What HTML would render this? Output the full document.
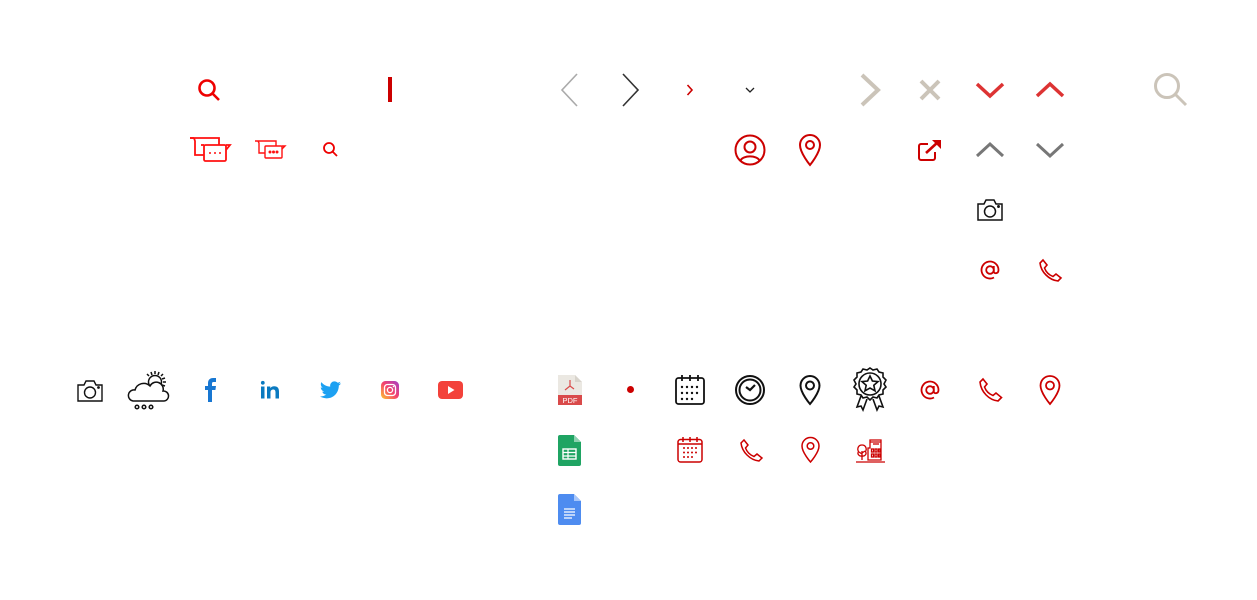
<!DOCTYPE html>
<html><head><meta charset="utf-8"><style>
html,body{margin:0;padding:0;background:#fff;width:1257px;height:600px;overflow:hidden;position:relative}
svg{position:absolute;overflow:visible}
</style></head><body>
<!-- Row 90 -->
<svg style="left:197px;top:78px" width="24" height="24" viewBox="0 0 24 24" fill="none" stroke="#e00" stroke-width="2.6"><circle cx="10" cy="10" r="7.5"/><path d="M15.5 15.5L22 22"/></svg>
<div style="position:absolute;left:388px;top:77px;width:4px;height:25px;background:#c00"></div>
<svg style="left:560px;top:73px" width="20" height="34" fill="none" stroke="#aaa" stroke-width="1.6"><path d="M17 1L2 17L17 33"/></svg>
<svg style="left:620px;top:73px" width="20" height="34" fill="none" stroke="#333" stroke-width="1.6"><path d="M3 1L18 17L3 33"/></svg>
<svg style="left:686px;top:84px" width="8" height="12" fill="none" stroke="#c00" stroke-width="1.6"><path d="M1.5 1L6 6L1.5 11"/></svg>
<svg style="left:745px;top:87px" width="10" height="6" fill="none" stroke="#222" stroke-width="1.3"><path d="M1 1L5 5L9 1"/></svg>
<svg style="left:860px;top:73px" width="22" height="34" fill="none" stroke="#cbc4b9" stroke-width="4"><path d="M2 2L18 17L2 32"/></svg>
<svg style="left:919px;top:79px" width="22" height="22" fill="none" stroke="#cbc4b9" stroke-width="4"><path d="M2 2L20 20M20 2L2 20"/></svg>
<svg style="left:976px;top:82px" width="28" height="16" fill="none" stroke="#d33" stroke-width="3.5"><path d="M1 2L14 14L27 2"/></svg>
<svg style="left:1036px;top:82px" width="28" height="16" fill="none" stroke="#d33" stroke-width="3.5"><path d="M1 14L14 2L27 14"/></svg>
<svg style="left:1153px;top:72px" width="36" height="36" fill="none" stroke="#cbc4b9" stroke-width="3"><circle cx="14" cy="14" r="11.5"/><path d="M22 22L33 33"/></svg>
<!-- Row 150 -->
<svg style="left:189px;top:137px" width="42" height="26" fill="none" stroke="#f11" stroke-width="1.8"><path d="M1 1H30V8M5 1L6 4V18H15"/><path d="M1 1H5"/><rect x="15" y="8" width="22" height="16" rx="1.5"/><path d="M37 8H41L37 13"/><path d="M12 8H15"/><circle cx="21" cy="16" r="1" fill="#f11" stroke="none"/><circle cx="26" cy="16" r="1" fill="#f11" stroke="none"/><circle cx="31" cy="16" r="1" fill="#f11" stroke="none"/></svg>
<svg style="left:254px;top:140px" width="32" height="19" fill="none" stroke="#f11" stroke-width="1.4"><path d="M1 1H22V6M4 1L5 3V13H11"/><rect x="11" y="6" width="17" height="12" rx="1"/><path d="M28 6H31L28 9"/><circle cx="16" cy="12" r=".8" fill="#f11"/><circle cx="19.5" cy="12" r=".8" fill="#f11"/><circle cx="23" cy="12" r=".8" fill="#f11"/></svg>
<svg style="left:322px;top:141px" width="16" height="16" fill="none" stroke="#e00" stroke-width="1.8"><circle cx="7" cy="7" r="5"/><path d="M10.5 10.5L15 15"/></svg>
<svg style="left:734px;top:134px" width="32" height="32" fill="none" stroke="#c00" stroke-width="2"><circle cx="16" cy="16" r="14.5"/><circle cx="16" cy="13" r="5.5"/><path d="M6.5 26.5C9 21 23 21 25.5 26.5"/></svg>
<svg style="left:798px;top:134px" width="24" height="32" fill="none" stroke="#c00" stroke-width="2"><path d="M12 31C12 31 2 19 2 11A10 10 0 0 1 22 11C22 19 12 31 12 31Z"/><circle cx="12" cy="11" r="4"/></svg>
<svg style="left:918px;top:139px" width="24" height="22" fill="none" stroke="#c00" stroke-width="2"><path d="M10 5H3A2 2 0 0 0 1 7V19A2 2 0 0 0 3 21H15A2 2 0 0 0 17 19V13"/><path d="M8 14L20 3" stroke-width="2.6"/><path d="M14 1H23V10Z" fill="#c00" stroke="none"/></svg>
<svg style="left:976px;top:142px" width="28" height="16" fill="none" stroke="#777" stroke-width="3"><path d="M1 14L14 2L27 14"/></svg>
<svg style="left:1036px;top:142px" width="28" height="16" fill="none" stroke="#777" stroke-width="3"><path d="M1 2L14 14L27 2"/></svg>
<!-- Row 210 -->
<svg style="left:977px;top:199px" width="26" height="22" fill="none" stroke="#111" stroke-width="1.5"><path d="M1 5H7L9 1H17L19 5H25V21H1Z"/><circle cx="13" cy="12.5" r="5.5"/><circle cx="21.5" cy="7.5" r=".7" fill="#111"/></svg>
<!-- Row 270 -->
<svg style="left:980px;top:260px" width="20" height="20" fill="none" stroke="#c00" stroke-width="1.8"><circle cx="10" cy="10" r="3.8"/><path d="M13.8 6V11.5C13.8 14 18.5 14 18.5 10A8.5 8.5 0 1 0 14 17.5"/></svg>
<svg style="left:1038px;top:259px" width="24" height="24" fill="none" stroke="#c00" stroke-width="1.6"><path d="M5 1L9 6L6.5 9C8 13 11 16 15 17.5L18 15L23 19L20 22C11 21 3 13 2 4Z"/></svg>
<!-- Row 390 left -->
<svg style="left:77px;top:380px" width="26" height="22" fill="none" stroke="#111" stroke-width="1.4"><path d="M1 5H7L9 1H17L19 5H25V21H1Z"/><circle cx="13" cy="12.5" r="5.5"/><circle cx="21.5" cy="7.5" r=".7" fill="#111"/></svg>
<svg style="left:129px;top:370px" width="42" height="42" fill="none" stroke="#111" stroke-width="1.5"><circle cx="26" cy="12" r="6.5"/><path d="M26 1V4M34 4L32 6M37 12H34M34 20L32 18M18 4L20 6M22 2L23 5M30 2L29 5M36 8L33 9M36 16L33 15"/><path d="M4 31H35A5 5 0 0 0 34 21A7 7 0 0 0 21 16A9 9 0 0 0 6 20A5.5 5.5 0 0 0 4 31Z" fill="#fff"/><circle cx="8" cy="37" r="1.8"/><circle cx="15" cy="37" r="1.8"/><circle cx="22" cy="37" r="1.8"/></svg>
<svg style="left:204px;top:378px" width="12" height="24"><path d="M4 24V12H1V8H4V5C4 2 6 0 9 0H12V4H9.5C8.5 4 8 4.5 8 5.5V8H12L11.4 12H8V24Z" fill="#1877d2"/></svg>
<svg style="left:261px;top:381px" width="19" height="18"><rect x="0" y="5.5" width="3.5" height="12" fill="#0a7ac0"/><circle cx="1.8" cy="1.8" r="1.9" fill="#0a7ac0"/><path d="M6 5.5H9.3V7.2C10 6 11.5 5.2 13.2 5.2C16.5 5.2 18 7 18 10.5V17.5H14.5V11.5C14.5 9.8 14 8.5 12.3 8.5C10.5 8.5 9.5 9.6 9.5 11.5V17.5H6Z" fill="#0a7ac0"/></svg>
<svg style="left:320px;top:381px" width="21" height="18" viewBox="0 0 24 20"><path d="M24 2.4C23.1 2.8 22.2 3 21.2 3.2C22.2 2.6 22.9 1.6 23.3 .5C22.3 1.1 21.3 1.5 20.2 1.7C18.3-.3 15-.4 13.1 1.5C11.8 2.7 11.3 4.5 11.7 6.2C7.7 6 4 4.1 1.6 1C.3 3.2 1 6.1 3.1 7.5C2.3 7.5 1.6 7.3 .9 6.9C.9 9.2 2.6 11.2 4.8 11.7C4.1 11.9 3.3 11.9 2.6 11.8C3.2 13.8 5.1 15.2 7.2 15.2C5.2 16.8 2.5 17.6 0 17.3C2.2 18.7 4.9 19.5 7.5 19.5C16.6 19.5 21.6 11.9 21.5 4.9C22.5 4.2 23.4 3.4 24 2.4Z" fill="#1da1f2"/></svg>
<svg style="left:381px;top:381px" width="18" height="18"><defs><linearGradient id="ig" x1="0" y1="1" x2="1" y2="0"><stop offset="0" stop-color="#fdc830"/><stop offset=".5" stop-color="#f5426c"/><stop offset="1" stop-color="#a23ec9"/></linearGradient></defs><rect width="18" height="18" rx="4.5" fill="url(#ig)"/><rect x="3.5" y="3.5" width="11" height="11" rx="3" fill="none" stroke="#fff" stroke-width="1.3"/><circle cx="9" cy="9" r="2.6" fill="none" stroke="#fff" stroke-width="1.3"/><circle cx="12.5" cy="5.5" r=".8" fill="#fff"/></svg>
<svg style="left:438px;top:381px" width="25" height="18"><rect width="25" height="18" rx="4" fill="#f3423b"/><path d="M10 5V13L16.5 9Z" fill="#fff"/></svg>
<!-- Row 390 right -->
<svg style="left:558px;top:375px" width="24" height="30"><path d="M0 0H17L24 7V30H0Z" fill="#ebe8e2"/><path d="M17 0L24 7H17Z" fill="#d8d4cc"/><rect x="0" y="20" width="24" height="10" fill="#d94a4a"/><text x="12" y="28" font-family="Liberation Sans" font-size="7.5" fill="#fff" text-anchor="middle">PDF</text><path d="M12 5V11M12 11L7 15M12 11L16 14" stroke="#d94a4a" stroke-width="1.2" fill="none"/></svg>
<div style="position:absolute;left:627px;top:386px;width:7px;height:7px;border-radius:50%;background:#c00"></div>
<svg style="left:675px;top:374px" width="30" height="31" fill="none" stroke="#111" stroke-width="1.8"><rect x="1" y="4" width="28" height="26" rx="2.5"/><path d="M7 1V7M15 1V7M23 1V7"/><g fill="#111" stroke="none"><circle cx="7" cy="13" r="1.2"/><circle cx="12" cy="13" r="1.2"/><circle cx="17" cy="13" r="1.2"/><circle cx="22" cy="13" r="1.2"/><circle cx="7" cy="19" r="1.2"/><circle cx="12" cy="19" r="1.2"/><circle cx="17" cy="19" r="1.2"/><circle cx="22" cy="19" r="1.2"/><circle cx="7" cy="25" r="1.2"/><circle cx="12" cy="25" r="1.2"/><circle cx="17" cy="25" r="1.2"/></g></svg>
<svg style="left:735px;top:375px" width="30" height="30" fill="none" stroke="#111" stroke-width="2"><circle cx="15" cy="15" r="14"/><circle cx="15" cy="15" r="10.5"/><path d="M11 12L15 15L20 10" stroke-width="2.2"/></svg>
<svg style="left:799px;top:375px" width="22" height="30" fill="none" stroke="#111" stroke-width="2"><path d="M11 29C11 29 1.5 18 1.5 10.5A9.5 9.5 0 0 1 20.5 10.5C20.5 18 11 29 11 29Z"/><circle cx="11" cy="10.5" r="4"/></svg>
<svg style="left:852px;top:367px" width="36" height="46" fill="none" stroke="#111" stroke-width="1.6"><path d="M18 1L21 3L25 2L27 5L31 6L31 10L34 13L32 17L34 20L31 23L31 27L27 28L25 31L21 30L18 33L15 30L11 31L9 28L5 27L5 23L2 20L4 17L2 13L5 10L5 6L9 5L11 2L15 3Z"/><circle cx="18" cy="17" r="11"/><path d="M18 9L20.4 14L26 14.6L21.8 18.3L23 23.8L18 21L13 23.8L14.2 18.3L10 14.6L15.6 14Z"/><path d="M9 29L5 40L9 39L11 43L15 32M27 29L31 40L27 39L25 43L21 32"/></svg>
<svg style="left:920px;top:380px" width="20" height="20" fill="none" stroke="#c00" stroke-width="1.8"><circle cx="10" cy="10" r="3.8"/><path d="M13.8 6V11.5C13.8 14 18.5 14 18.5 10A8.5 8.5 0 1 0 14 17.5"/></svg>
<svg style="left:978px;top:378px" width="25" height="25" fill="none" stroke="#c00" stroke-width="1.6"><path d="M5 1L9 6L6.5 9C8 13 11 16 15 17.5L18 15L23.5 19.5L20 23C11 22 3 14 2 4Z"/></svg>
<svg style="left:1039px;top:375px" width="22" height="30" fill="none" stroke="#c00" stroke-width="1.8"><path d="M11 29C11 29 1.5 18 1.5 10.5A9.5 9.5 0 0 1 20.5 10.5C20.5 18 11 29 11 29Z"/><circle cx="11" cy="10.5" r="4"/></svg>
<!-- Row 450 -->
<svg style="left:558px;top:435px" width="23" height="31"><path d="M0 2Q0 0 2 0H16L23 7V29Q23 31 21 31H2Q0 31 0 29Z" fill="#1fa463"/><path d="M16 0L23 7H16Z" fill="#8ed1b1"/><rect x="5" y="14" width="13" height="10" fill="none" stroke="#fff" stroke-width="1.4"/><path d="M5 17.5H18M5 21H18M10 14V24" stroke="#fff" stroke-width="1.2"/></svg>
<svg style="left:677px;top:436px" width="26" height="27" fill="none" stroke="#c00" stroke-width="1.5"><rect x="1" y="3.5" width="24" height="22.5" rx="2.5"/><path d="M1 8H25M6 1V6M13 1V6M20 1V6"/><g fill="#c00" stroke="none"><circle cx="7" cy="12" r="1"/><circle cx="11" cy="12" r="1"/><circle cx="15" cy="12" r="1"/><circle cx="19" cy="12" r="1"/><circle cx="7" cy="16.5" r="1"/><circle cx="11" cy="16.5" r="1"/><circle cx="15" cy="16.5" r="1"/><circle cx="19" cy="16.5" r="1"/><circle cx="7" cy="21" r="1"/><circle cx="11" cy="21" r="1"/><circle cx="15" cy="21" r="1"/></g></svg>
<svg style="left:739px;top:439px" width="24" height="24" fill="none" stroke="#c00" stroke-width="1.5"><path d="M5 1L9 6L6.5 9C8 13 11 16 15 17.5L18 15L23 19L20 22C11 21 3 13 2 4Z"/></svg>
<svg style="left:801px;top:437px" width="19" height="26" fill="none" stroke="#c00" stroke-width="1.5"><path d="M9.5 25C9.5 25 1 15.5 1 9A8.5 8.5 0 0 1 18 9C18 15.5 9.5 25 9.5 25Z"/><circle cx="9.5" cy="9" r="3.3"/></svg>
<svg style="left:856px;top:437px" width="29" height="26" fill="none" stroke="#c00" stroke-width="1.3"><path d="M0 25H29"/><path d="M14 5V3H25V5M14 5H25V23H12V11H14Z"/><path d="M17 7H23" /><g fill="none"><rect x="15.5" y="12" width="2" height="3"/><rect x="19" y="12" width="2" height="3"/><rect x="22.5" y="12" width="1.5" height="3"/><rect x="15.5" y="17" width="2" height="3"/><rect x="19" y="17" width="2" height="3"/><rect x="22.5" y="17" width="1.5" height="3"/></g><path d="M6 23V14M6 17L3 15M6 16L9 14"/><path d="M6 8C2 8 1 12 2.5 14.5C1 17 3 19.5 6 19C9 19.5 11 17 9.5 14.5C11 12 10 8 6 8Z"/></svg>
<!-- Row 510 -->
<svg style="left:558px;top:494px" width="23" height="31"><path d="M0 2Q0 0 2 0H16L23 7V29Q23 31 21 31H2Q0 31 0 29Z" fill="#4e8cf0"/><path d="M16 0L23 7H16Z" fill="#a8c7fa"/><path d="M6 15H17M6 18H17M6 21H17M6 24H14" stroke="#fff" stroke-width="1.2"/></svg>
</body></html>
